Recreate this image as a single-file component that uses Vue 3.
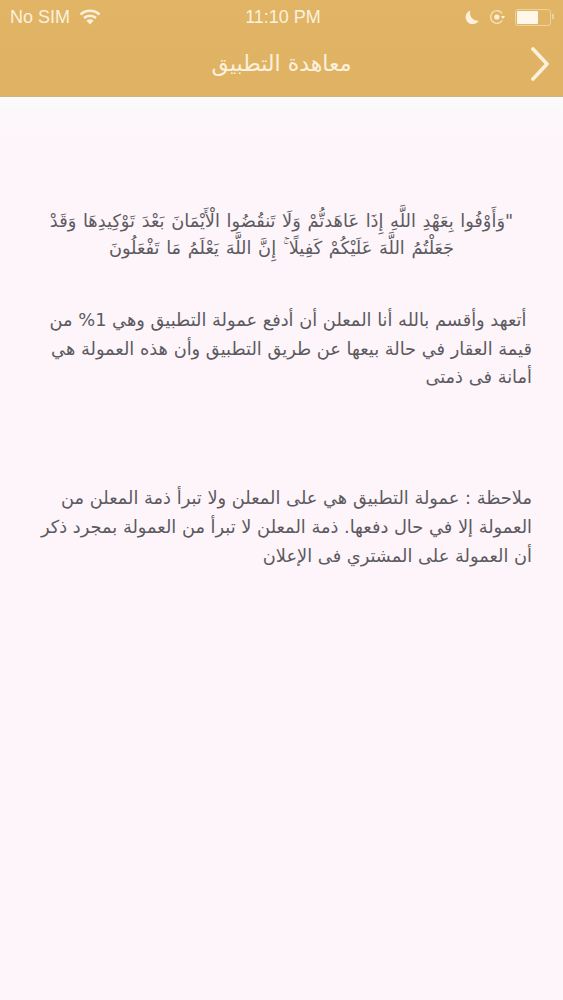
<script setup>
const quote = [
  '"وَأَوْفُوا بِعَهْدِ اللَّهِ إِذَا عَاهَدتُّمْ وَلَا تَنقُضُوا الْأَيْمَانَ بَعْدَ تَوْكِيدِهَا وَقَدْ',
  'جَعَلْتُمُ اللَّهَ عَلَيْكُمْ كَفِيلًا ۚ إِنَّ اللَّهَ يَعْلَمُ مَا تَفْعَلُونَ'
]
const pledge = [
  '\u00a0أتعهد وأقسم بالله أنا المعلن أن أدفع عمولة التطبيق وهي 1% من',
  'قيمة العقار في حالة بيعها عن طريق التطبيق وأن هذه العمولة هي',
  'أمانة فى ذمتى'
]
const note = [
  'ملاحظة : عمولة التطبيق هي على المعلن ولا تبرأ ذمة المعلن من',
  'العمولة إلا في حال دفعها. ذمة المعلن لا تبرأ من العمولة بمجرد ذكر',
  'أن العمولة على المشتري فى الإعلان'
]
</script>

<template>
  <div class="page">
    <header class="head">
      <div class="status">
        <div class="left">
          <span>No SIM</span>
          <svg class="wifi" viewBox="0 0 22 16" width="22" height="16">
            <path d="M1.500 5.500 A14 14 0 0 1 20.500 5.500" />
            <path d="M5 9 A9 9 0 0 1 17 9" />
            <path class="solid wedge" d="M11 15.500 L7.500 11.800 A5 5 0 0 1 14.500 11.800 Z" />
          </svg>
        </div>
        <span class="time">11:10 PM</span>
        <div class="right">
          <svg viewBox="0 0 14 14" width="14" height="14">
            <path class="solid" d="M5.500 0.500 A7 7 0 1 0 13.800 10.500 A7.500 7.500 0 0 1 5.500 0.500 Z" />
          </svg>
          <svg viewBox="0 0 16 16" width="16" height="16">
            <path class="thin" d="M13.200 4.600 A6.300 6.300 0 1 0 13.200 11.400" />
            <path class="solid" d="M12 7 L16 7 L14 10 Z" />
            <circle class="solid" cx="7.800" cy="8" r="2.600" />
          </svg>
          <span class="battery"><i></i></span>
        </div>
      </div>
      <div class="nav">
        <h1>معاهدة التطبيق</h1>
        <svg class="chev" viewBox="0 0 20 34" width="20" height="34">
          <path d="M3 2 L17 17 L3 32" />
        </svg>
      </div>
    </header>
    <main class="body" dir="rtl">
      <p class="quote"><span v-for="l in quote" :key="l">{{ l }}</span></p>
      <p class="pledge"><span v-for="l in pledge" :key="l">{{ l }}</span></p>
      <p class="note"><span v-for="l in note" :key="l">{{ l }}</span></p>
    </main>
  </div>
</template>

<style>
html, body { margin: 0; background: #fdf5fa; }
</style>

<style scoped>
.page {
  width: 563px;
  height: 1000px;
  overflow: hidden;
  background: #fdf5fa;
  font-family: "DejaVu Sans", "Noto Sans", sans-serif;
}
.head {
  height: 97px;
  box-sizing: border-box;
  background: linear-gradient(#e1b565, #dfb264);
  border-bottom: 1px solid #c9b48e;
  color: #fbf1dc;
}
.status {
  height: 34px;
  padding: 0 12px 0 10px;
  display: grid;
  grid-template-columns: 1fr auto 1fr;
  align-items: center;
  font-family: "Liberation Sans", sans-serif;
  font-size: 18px;
}
.left { display: flex; align-items: center; gap: 9px; }
.time { margin-left: 5px; }
.right { display: flex; justify-content: flex-end; align-items: center; gap: 10px; }
.wifi path { fill: none; stroke: #fbf1dc; stroke-width: 2.600; }
.wifi .wedge { fill: #fbf1dc; stroke: none; }
.solid { fill: #fbf1dc; }
.thin { fill: none; stroke: #f5e2b8; stroke-width: 1.300; }
.battery {
  position: relative;
  width: 36px;
  height: 17px;
  box-sizing: border-box;
  border: 1px solid #ecd29f;
  border-radius: 3px;
  padding: 1px;
  display: block;
}
.battery::after {
  content: "";
  position: absolute;
  right: -4px;
  top: 4px;
  width: 2px;
  height: 5px;
  background: #ecd29f;
}
.battery i { display: block; width: 21px; height: 100%; background: #fff8ea; border-radius: 1px; }
.nav {
  height: 62px;
  position: relative;
  display: flex;
  align-items: center;
  justify-content: center;
}
.nav h1 { margin: 0 0 3px; font-size: 22px; font-weight: 400; }
.chev { position: absolute; right: 13px; top: 13px; }
.chev path { fill: none; stroke: #fbf1dc; stroke-width: 3.600; stroke-linecap: round; stroke-linejoin: round; }
.body {
  padding: 0 31px;
  color: #5c5a60;
  font-size: 17.800px;
  background: linear-gradient(#fbfafa, #fdf5fa 40px);
  height: 903px;
  box-sizing: border-box;
}
.body p { margin: 0; }
.body span { display: block; white-space: nowrap; }
.quote { padding-top: 110px; text-align: center; line-height: 27px; word-spacing: 1px; }
.pledge { padding-top: 45px; line-height: 28.500px; }
.note { padding-top: 91px; line-height: 29px; }
</style>
